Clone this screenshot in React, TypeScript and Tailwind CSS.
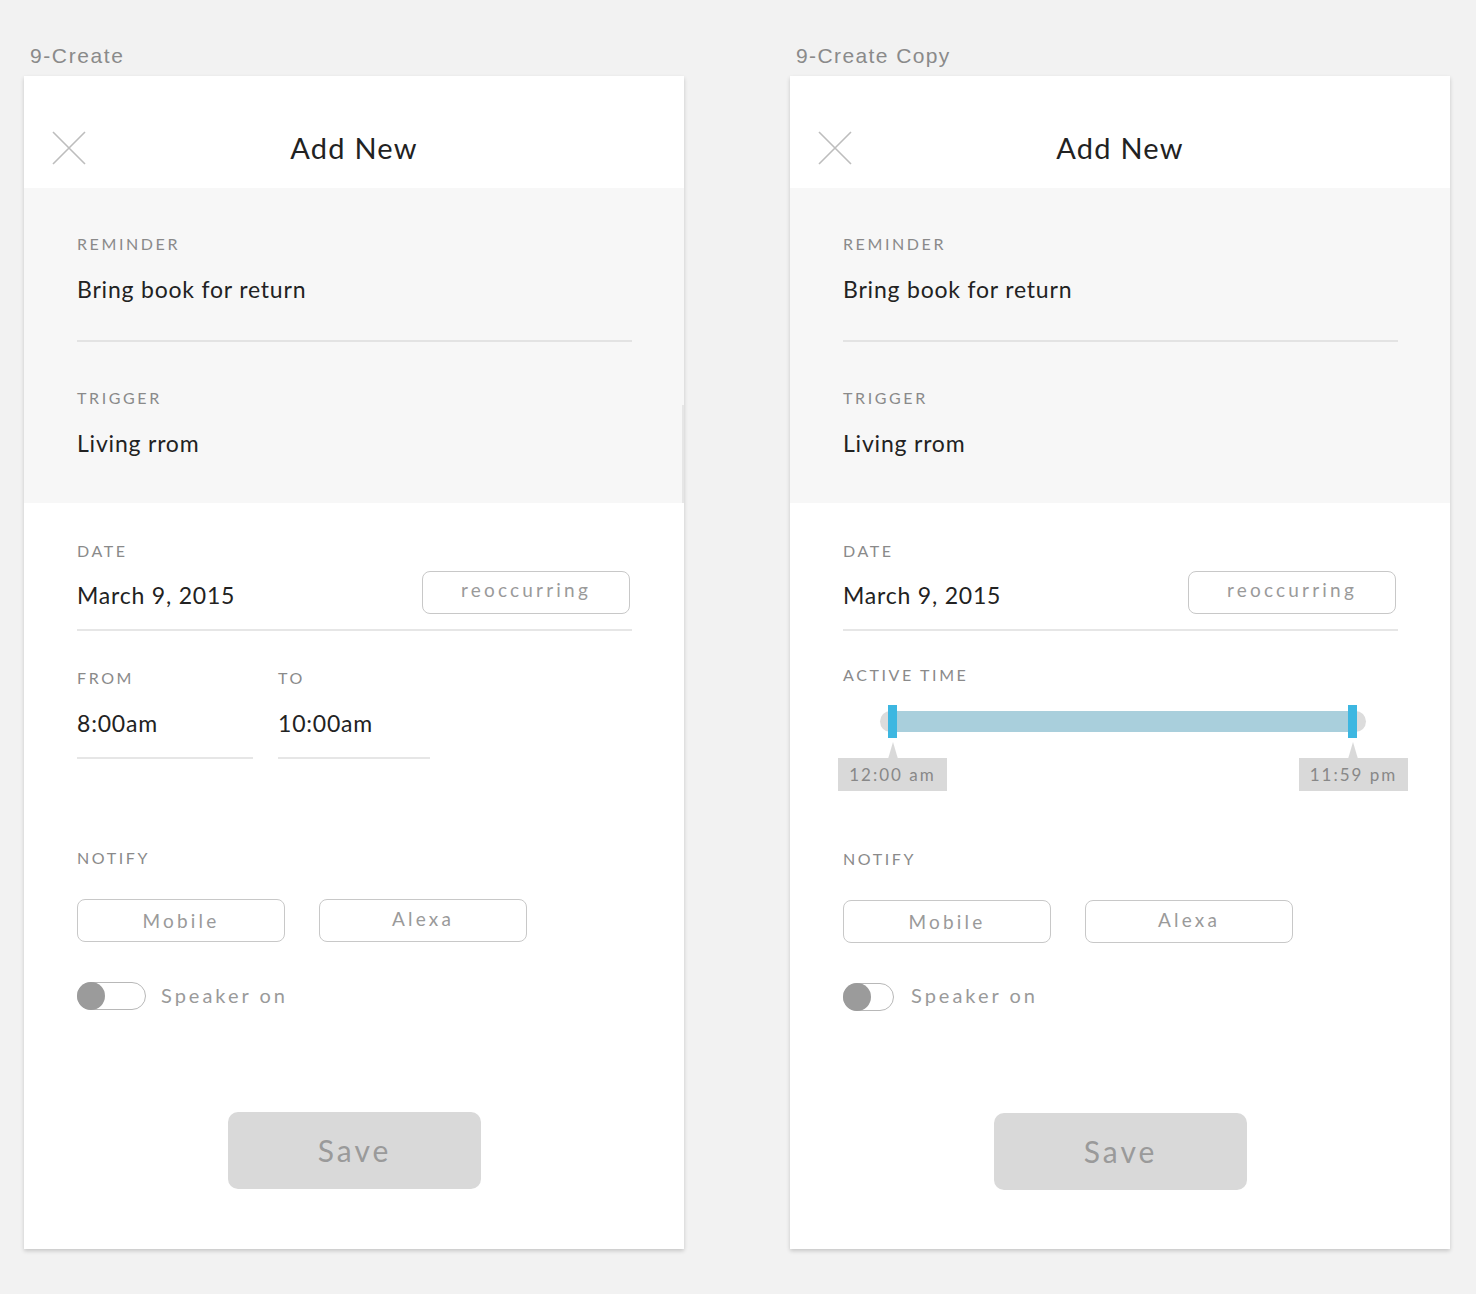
import React from "react";

const F = { fontFamily: "Lato, 'Noto Sans', sans-serif" };

function CloseIcon() {
  return (
    <svg width="34" height="34" viewBox="0 0 34 34" fill="none">
      <path d="M1 1 L33 33 M33 1 L1 33" stroke="#bdbdbd" strokeWidth="1.6" />
    </svg>
  );
}

function Label({ children }: { children: React.ReactNode }) {
  return (
    <div className="text-[16px] leading-[20px] tracking-[2.6px] text-[#8a8a8a] uppercase">
      {children}
    </div>
  );
}

function Value({ children, className = "" }: { children: React.ReactNode; className?: string }) {
  return (
    <div className={"text-[23px] leading-[30px] tracking-[0.8px] text-[#222] " + className}>{children}</div>
  );
}

function OutlineButton({ children, className = "" }: { children: React.ReactNode; className?: string }) {
  return (
    <div
      className={
        "w-[208px] h-[43px] rounded-[8px] border border-[#c8c8c8] flex items-center justify-center text-[19px] tracking-[3.2px] text-[#9a9a9a] " +
        className
      }
    >
      {children}
    </div>
  );
}

function Slider() {
  return (
    <div className="relative w-[570px] h-[86px] ml-[-5px]">
      <div className="absolute left-[42px] top-[6px] w-[486px] h-[21px] rounded-full bg-[#dcdcdc]" />
      <div className="absolute left-[55px] top-[6px] w-[460px] h-[21px] bg-[#a9cfdc]" />
      <div className="absolute left-[50px] top-0 w-[9px] h-[33px] bg-[#3db7e1]" />
      <div className="absolute left-[510px] top-0 w-[9px] h-[33px] bg-[#3db7e1]" />
      <svg className="absolute left-[49px] top-[37px]" width="12" height="17" viewBox="0 0 12 17">
        <path d="M6 0 L11 17 L1 17 Z" fill="#d9d9d9" />
      </svg>
      <svg className="absolute left-[509px] top-[37px]" width="12" height="17" viewBox="0 0 12 17">
        <path d="M6 0 L11 17 L1 17 Z" fill="#d9d9d9" />
      </svg>
      <div className="absolute left-0 top-[53px] w-[109px] h-[33px] bg-[#d9d9d9] flex items-center justify-center text-[17px] tracking-[2px] text-[#888]">
        12:00 am
      </div>
      <div className="absolute left-[461px] top-[53px] w-[109px] h-[33px] bg-[#d9d9d9] flex items-center justify-center text-[17px] tracking-[2px] text-[#888]">
        11:59 pm
      </div>
    </div>
  );
}

function Card({ copy }: { copy: boolean }) {
  return (
    <div
      className="relative w-[660px] h-[1173px] bg-white shadow-[0_2px_4px_rgba(0,0,0,0.18)] flex flex-col"
      style={F}
    >
      {/* header */}
      <div className="h-[112px] grid grid-cols-[1fr_auto_1fr] items-center px-[28px]">
        <div className="pt-[32px]">
          <CloseIcon />
        </div>
        <div className="text-[29px] text-[#222] tracking-[1.2px] pt-[32px]">Add New</div>
        <div />
      </div>
      {/* gray section */}
      <div className="bg-[#f7f7f7] px-[53px] pt-[46px] pb-[45px]">
        <Label>Reminder</Label>
        <Value className="mt-[20px]">Bring book for return</Value>
        <div className="mt-[36px] h-[2px] bg-[#e3e3e3] mr-[-1px]" />
        <div className="mt-[46px]">
          <Label>Trigger</Label>
        </div>
        <Value className="mt-[20px]">Living rrom</Value>
      </div>
      {!copy && <div className="absolute right-0 top-[329px] w-[2px] h-[98px] bg-[#e6e6e6]" />}
      {/* white section */}
      <div className="px-[53px] pt-[38px] flex flex-col">
        <Label>Date</Label>
        <div className="mt-[10px] h-[43px] flex items-center justify-between">
          <Value className="pt-[5px]">March 9, 2015</Value>
          <OutlineButton className="pb-[4px] mr-[1px]">reoccurring</OutlineButton>
        </div>
        <div className="mt-[15px] h-[2px] bg-[#e6e6e6] mr-[-1px]" />
        {copy ? (
          <div className="mt-[34px]">
            <Label>Active Time</Label>
            <div className="mt-[20px]">
              <Slider />
            </div>
          </div>
        ) : (
          <div className="mt-[37px] flex">
            <div className="w-[201px]">
              <Label>From</Label>
              <Value className="mt-[20px]">8:00am</Value>
              <div className="mt-[19px] h-[2px] w-[176px] bg-[#e6e6e6]" />
            </div>
            <div>
              <Label>To</Label>
              <Value className="mt-[20px]">10:00am</Value>
              <div className="mt-[19px] h-[2px] w-[152px] bg-[#e6e6e6]" />
            </div>
          </div>
        )}
        <div className={copy ? "mt-[58px]" : "mt-[89px]"}>
          <Label>Notify</Label>
        </div>
        <div className="mt-[31px] flex gap-[34px]">
          <OutlineButton className="pt-[1px]">Mobile</OutlineButton>
          <OutlineButton className="pb-[3px]">Alexa</OutlineButton>
        </div>
        <div className={"flex items-center " + (copy ? "mt-[37px] gap-[17px]" : "mt-[38px] gap-[15px]")}>
          <div
            className={
              "relative h-[28px] rounded-full border border-[#b8b8b8] " + (copy ? "w-[51px]" : "w-[69px]")
            }
          >
            <div className="absolute left-[-1px] top-[-1px] w-[28px] h-[28px] rounded-full bg-[#9b9b9b]" />
          </div>
          <div className={"text-[20px] tracking-[3px] text-[#9a9a9a] " + (copy ? "pb-[3px]" : "pb-[2px]")}>
            Speaker on
          </div>
        </div>
        <div className="self-center w-[253px] h-[77px] rounded-[10px] bg-[#d9d9d9] flex items-center justify-center text-[30px] tracking-[3px] text-[#9a9a9a] ml-[1px] mt-[100px]">
          Save
        </div>
      </div>
    </div>
  );
}

export default function App() {
  return (
    <div className="min-h-[1294px] w-[1476px] bg-[#f2f2f2] flex gap-[106px] pl-[24px] pt-[43px]">
      <div className="flex flex-col">
        <div
          className="ml-[6px] h-[26px] leading-[26px] text-[21px] tracking-[1.6px] text-[#8a8a8a] mb-[7px]"
          style={{ fontFamily: "'Liberation Sans', Arial, sans-serif" }}
        >
          9-Create
        </div>
        <Card copy={false} />
      </div>
      <div className="flex flex-col">
        <div
          className="ml-[6px] h-[26px] leading-[26px] text-[21px] tracking-[1.4px] text-[#8a8a8a] mb-[7px]"
          style={{ fontFamily: "'Liberation Sans', Arial, sans-serif" }}
        >
          9-Create Copy
        </div>
        <Card copy={true} />
      </div>
    </div>
  );
}
